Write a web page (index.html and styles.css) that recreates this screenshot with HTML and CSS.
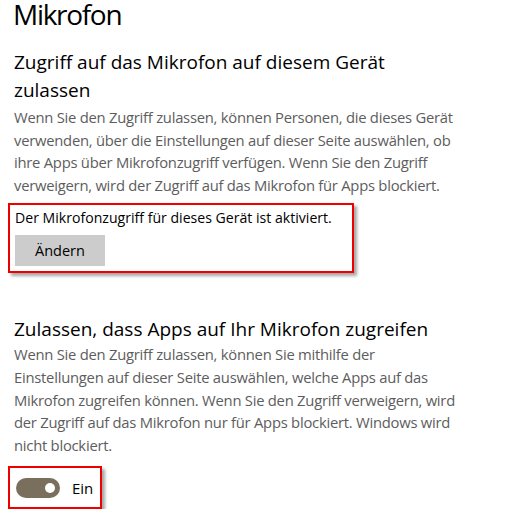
FILE: index.html
```html
<!DOCTYPE html>
<html lang="de">
<head>
<meta charset="UTF-8">
<meta name="viewport" content="width=device-width, initial-scale=1.0">
<title>Mikrofon</title>
<link rel="stylesheet" href="styles.css">
</head>
<body>

<h1>Mikrofon</h1>

<h2>Zugriff auf das Mikrofon auf diesem Gerät zulassen</h2>
<p class="beschreibung">
  Wenn Sie den Zugriff zulassen, können Personen, die dieses Gerät verwenden, über die Einstellungen auf dieser Seite auswählen, ob ihre Apps über Mikrofonzugriff verfügen. Wenn Sie den Zugriff verweigern, wird der Zugriff auf das Mikrofon für Apps blockiert.
</p>

<div class="markiert geraet">
  <div class="status">Der Mikrofonzugriff für dieses Gerät ist aktiviert.</div>
  <button class="aendern-btn">Ändern</button>
</div>

<h2 class="abschnitt">Zulassen, dass Apps auf Ihr Mikrofon zugreifen</h2>
<p class="beschreibung schmal">
  Wenn Sie den Zugriff zulassen, können Sie mithilfe der Einstellungen auf dieser Seite auswählen, welche Apps auf das Mikrofon zugreifen können. Wenn Sie den Zugriff verweigern, wird der Zugriff auf das Mikrofon nur für Apps blockiert. Windows wird nicht blockiert.
</p>

<div class="markiert schalter-box">
  <div class="schalter an"><span class="knopf"></span></div>
  <span class="schalter-text">Ein</span>
</div>

</body>
</html>
```

FILE: styles.css
```css
body {
  margin: 0;
  padding: 0 0 0 14px;
  background: #fff;
  color: #000;
  font-family: "Open Sans", "Noto Sans", sans-serif;
  width: 490px;
}
h1 {
  font-size: 28px;
  font-weight: normal;
  letter-spacing: -1.3px;
  line-height: 32px;
  margin: -2px 0 0 -1px;
}
h2 {
  font-size: 19px;
  font-weight: normal;
  line-height: 28px;
  margin: 18px 0 2px 0;
  width: 400px;
}
h2.abschnitt {
  margin-top: 42px;
  margin-bottom: 0;
  width: auto;
}
.beschreibung {
  color: #5d5d5d;
  font-size: 14.8px;
  letter-spacing: -0.25px;
  line-height: 22.6px;
  margin: 0;
  width: 455px;
}
.beschreibung.schmal {
  width: 450px;
}
.markiert {
  border: 2px solid #e00;
  box-shadow: 3px 3px 3px rgba(0, 0, 0, 0.35);
  margin-left: -6px;
}
.geraet {
  margin-top: 7px;
  width: 337px;
  padding: 3px 0 5px 5px;
}
.status {
  font-size: 14.1px;
  line-height: 20px;
}
.aendern-btn {
  display: block;
  margin-top: 7px;
  width: 90px;
  height: 31px;
  background: #ccc;
  border: none;
  font-family: inherit;
  font-size: 14.5px;
  color: #000;
  padding: 0;
}
.schalter-box {
  margin-top: 10px;
  display: flex;
  align-items: center;
  gap: 12px;
  padding-left: 6px;
  box-sizing: border-box;
  width: 94px;
  height: 43px;
}
.schalter {
  width: 44px;
  height: 20px;
  border-radius: 10px;
  background: #7a6f5c;
  display: flex;
  align-items: center;
  justify-content: flex-end;
  padding: 0 5px;
  box-sizing: border-box;
}
.knopf {
  width: 10px;
  height: 10px;
  border-radius: 50%;
  background: #fff;
}
.schalter-text {
  font-size: 15px;
}
```
